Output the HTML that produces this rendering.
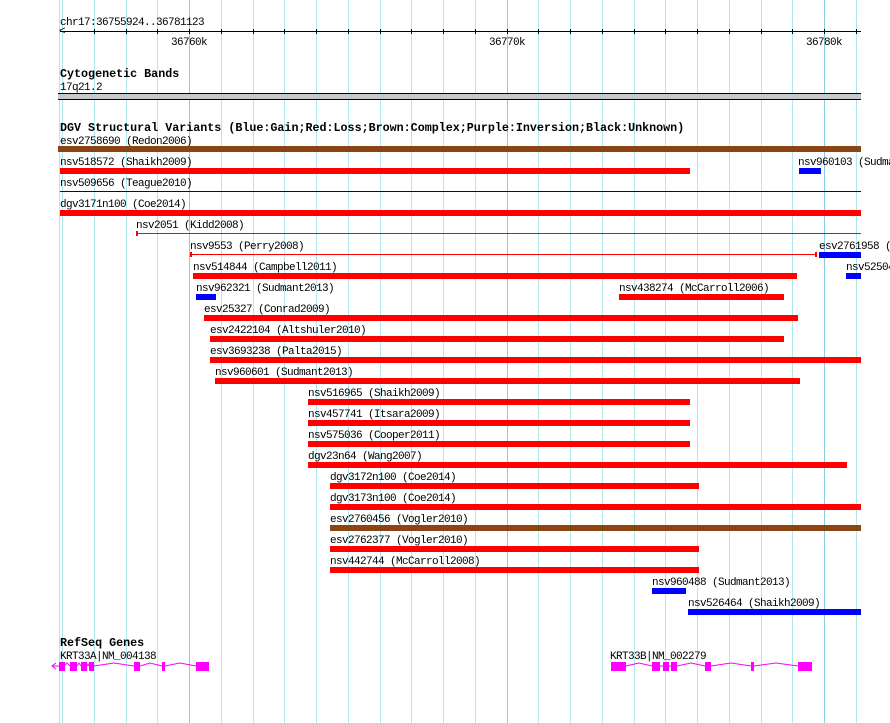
<!DOCTYPE html>
<html style="overflow:hidden"><head><meta charset="utf-8"><style>
body{margin:0;width:890px;height:723px;background:#fff;position:relative;overflow:hidden;font-family:"Liberation Mono",monospace;}
div{position:absolute;}
.g{top:0;height:723px;width:1px;background:#b0e8ee;}
.gd{background:#88cce4;}
.t{font-size:11px;letter-spacing:-0.6px;line-height:12px;white-space:nowrap;color:#000;margin-top:3px;}
.h{font-size:11.7px;font-weight:bold;line-height:13px;white-space:nowrap;margin-top:1px;}
.r{background:#f00;height:6px;}
.b{background:#00f;height:6px;}
.br{background:#8b4513;height:6px;}
.m{background:#f0f;height:9px;top:662px;}
.tk{width:1px;height:5px;top:29px;background:#000;}
</style></head><body>
<div class="g" style="left:59px"></div>
<div class="g" style="left:62px"></div><div class="g" style="left:94px"></div><div class="g" style="left:126px"></div><div class="g" style="left:157px"></div><div class="g gd" style="left:189px"></div><div class="g" style="left:221px"></div><div class="g" style="left:253px"></div><div class="g" style="left:284px"></div><div class="g" style="left:316px"></div><div class="g" style="left:348px"></div><div class="g" style="left:380px"></div><div class="g" style="left:411px"></div><div class="g" style="left:443px"></div><div class="g" style="left:475px"></div><div class="g gd" style="left:507px"></div><div class="g" style="left:538px"></div><div class="g" style="left:570px"></div><div class="g" style="left:602px"></div><div class="g" style="left:634px"></div><div class="g" style="left:665px"></div><div class="g" style="left:697px"></div><div class="g" style="left:729px"></div><div class="g" style="left:761px"></div><div class="g" style="left:792px"></div><div class="g gd" style="left:824px"></div><div class="g" style="left:856px"></div>
<div class="t" style="left:60px;top:14px">chr17:36755924..36781123</div>
<div style="left:60px;top:31px;width:801px;height:1px;background:#000"></div>
<div class="t" style="left:59px;top:23px">&lt;</div>
<div class="tk" style="left:94px"></div><div class="tk" style="left:126px"></div><div class="tk" style="left:157px"></div><div class="tk" style="left:189px"></div><div class="tk" style="left:221px"></div><div class="tk" style="left:253px"></div><div class="tk" style="left:284px"></div><div class="tk" style="left:316px"></div><div class="tk" style="left:348px"></div><div class="tk" style="left:380px"></div><div class="tk" style="left:411px"></div><div class="tk" style="left:443px"></div><div class="tk" style="left:475px"></div><div class="tk" style="left:507px"></div><div class="tk" style="left:538px"></div><div class="tk" style="left:570px"></div><div class="tk" style="left:602px"></div><div class="tk" style="left:634px"></div><div class="tk" style="left:665px"></div><div class="tk" style="left:697px"></div><div class="tk" style="left:729px"></div><div class="tk" style="left:761px"></div><div class="tk" style="left:792px"></div><div class="tk" style="left:824px"></div><div class="tk" style="left:856px"></div>
<div class="t" style="left:171px;top:34px">36760k</div>
<div class="t" style="left:489px;top:34px">36770k</div>
<div class="t" style="left:806px;top:34px">36780k</div>
<div class="h" style="left:60px;top:67px">Cytogenetic Bands</div>
<div class="t" style="left:60px;top:79px">17q21.2</div>
<div style="left:58px;top:93px;width:803px;height:5px;background:#c8c8c8;border-top:1px solid #000;border-bottom:1px solid #000"></div>
<div class="h" style="left:60px;top:121px">DGV Structural Variants (Blue:Gain;Red:Loss;Brown:Complex;Purple:Inversion;Black:Unknown)</div>
<div class="t" style="left:60px;top:133px">esv2758690 (Redon2006)</div><div class="br" style="left:58px;top:146px;width:803px"></div>
<div class="t" style="left:60px;top:154px">nsv518572 (Shaikh2009)</div><div class="r" style="left:60px;top:168px;width:630px"></div>
<div class="t" style="left:798px;top:154px">nsv960103 (Sudmant2013)</div><div class="b" style="left:799px;top:168px;width:22px"></div>
<div class="t" style="left:60px;top:175px">nsv509656 (Teague2010)</div><div style="left:60px;top:191px;width:801px;height:1px;background:#00008b"></div>
<div class="t" style="left:60px;top:196px">dgv3171n100 (Coe2014)</div><div class="r" style="left:60px;top:210px;width:801px"></div>
<div class="t" style="left:136px;top:217px">nsv2051 (Kidd2008)</div><div style="left:136px;top:233px;width:725px;height:1px;background:#f00"></div><div style="left:136px;top:231px;width:2px;height:5px;background:#f00"></div>
<div class="t" style="left:190px;top:238px">nsv9553 (Perry2008)</div><div style="left:190px;top:254px;width:626px;height:1px;background:#f00"></div><div style="left:190px;top:252px;width:2px;height:5px;background:#f00"></div><div style="left:815px;top:252px;width:2px;height:5px;background:#f00"></div>
<div class="t" style="left:819px;top:238px">esv2761958 (Vogler2010)</div><div class="b" style="left:819px;top:252px;width:42px"></div>
<div class="t" style="left:193px;top:259px">nsv514844 (Campbell2011)</div><div class="r" style="left:193px;top:273px;width:604px"></div>
<div class="t" style="left:846px;top:259px">nsv525044</div><div class="b" style="left:846px;top:273px;width:15px"></div>
<div class="t" style="left:196px;top:280px">nsv962321 (Sudmant2013)</div><div class="b" style="left:196px;top:294px;width:20px"></div>
<div class="t" style="left:619px;top:280px">nsv438274 (McCarroll2006)</div><div class="r" style="left:619px;top:294px;width:165px"></div>
<div class="t" style="left:204px;top:301px">esv25327 (Conrad2009)</div><div class="r" style="left:204px;top:315px;width:594px"></div>
<div class="t" style="left:210px;top:322px">esv2422104 (Altshuler2010)</div><div class="r" style="left:210px;top:336px;width:574px"></div>
<div class="t" style="left:210px;top:343px">esv3693238 (Palta2015)</div><div class="r" style="left:210px;top:357px;width:651px"></div>
<div class="t" style="left:215px;top:364px">nsv960601 (Sudmant2013)</div><div class="r" style="left:215px;top:378px;width:585px"></div>
<div class="t" style="left:308px;top:385px">nsv516965 (Shaikh2009)</div><div class="r" style="left:308px;top:399px;width:382px"></div>
<div class="t" style="left:308px;top:406px">nsv457741 (Itsara2009)</div><div class="r" style="left:308px;top:420px;width:382px"></div>
<div class="t" style="left:308px;top:427px">nsv575036 (Cooper2011)</div><div class="r" style="left:308px;top:441px;width:382px"></div>
<div class="t" style="left:308px;top:448px">dgv23n64 (Wang2007)</div><div class="r" style="left:308px;top:462px;width:539px"></div>
<div class="t" style="left:330px;top:469px">dgv3172n100 (Coe2014)</div><div class="r" style="left:330px;top:483px;width:369px"></div>
<div class="t" style="left:330px;top:490px">dgv3173n100 (Coe2014)</div><div class="r" style="left:330px;top:504px;width:531px"></div>
<div class="t" style="left:330px;top:511px">esv2760456 (Vogler2010)</div><div class="br" style="left:330px;top:525px;width:531px"></div>
<div class="t" style="left:330px;top:532px">esv2762377 (Vogler2010)</div><div class="r" style="left:330px;top:546px;width:369px"></div>
<div class="t" style="left:330px;top:553px">nsv442744 (McCarroll2008)</div><div class="r" style="left:330px;top:567px;width:369px"></div>
<div class="t" style="left:652px;top:574px">nsv960488 (Sudmant2013)</div><div class="b" style="left:652px;top:588px;width:34px"></div>
<div class="t" style="left:688px;top:595px">nsv526464 (Shaikh2009)</div><div class="b" style="left:688px;top:609px;width:173px"></div>
<div class="h" style="left:60px;top:636px">RefSeq Genes</div>
<div class="t" style="left:60px;top:648px">KRT33A|NM_004138</div>
<div class="t" style="left:610px;top:648px">KRT33B|NM_002279</div>
<svg style="position:absolute;left:0;top:0" width="890" height="723">
<g fill="none" stroke="#f0f" stroke-width="1">
<path d="M52 666 H59 M56 663 L52 666 L56 669"/>
<path d="M64 666 L67 663 L70 666 M77 666 L79 663 L81 666 M87 666 L88 664 L89 666 M94 666 L114 663 L134 666 M140 666 L150 663 L162 666 M165 666 L180 663 L196 666"/>
<path d="M626 666 L639 663 L652 666 M660 666 L663 666 M669 666 L671 666 M677 666 L691 663 L705 666 M711 666 L731 663 L751 666 M754 666 L776 663 L798 666"/>
</g></svg>
<div class="m" style="left:59px;width:6px"></div><div class="m" style="left:70px;width:7px"></div><div class="m" style="left:81px;width:6px"></div><div class="m" style="left:89px;width:5px"></div><div class="m" style="left:134px;width:6px"></div><div class="m" style="left:162px;width:3px"></div><div class="m" style="left:196px;width:13px"></div>
<div class="m" style="left:611px;width:15px"></div><div class="m" style="left:652px;width:8px"></div><div class="m" style="left:663px;width:6px"></div><div class="m" style="left:671px;width:6px"></div><div class="m" style="left:705px;width:6px"></div><div class="m" style="left:751px;width:3px"></div><div class="m" style="left:798px;width:14px"></div>
</body></html>
